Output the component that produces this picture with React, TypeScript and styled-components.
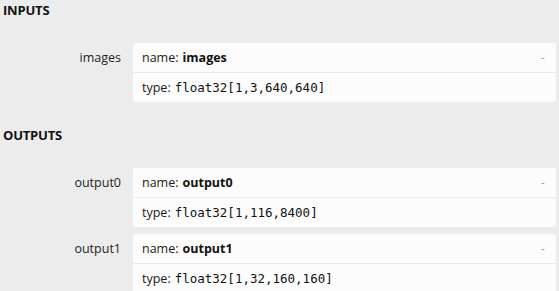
import React from "react";
import styled, { createGlobalStyle } from "styled-components";

interface Argument {
  label: string;
  name: string;
  type: string;
}

const inputs: Argument[] = [
  { label: "images", name: "images", type: "float32[1,3,640,640]" },
];

const outputs: Argument[] = [
  { label: "output0", name: "output0", type: "float32[1,116,8400]" },
  { label: "output1", name: "output1", type: "float32[1,32,160,160]" },
];

const GlobalStyle = createGlobalStyle`
  html, body {
    margin: 0;
    padding: 0;
    background: #ececec;
  }
  body {
    font-family: "Open Sans", "Noto Sans", "Liberation Sans", sans-serif;
    color: #1a1a1a;
    overflow: hidden;
  }
`;

const Page = styled.div`
  width: 559px;
  height: 291px;
  padding: 0 3px;
  box-sizing: border-box;
  overflow: hidden;
`;

const Section = styled.section`
  margin-bottom: 23px;
`;

const Header = styled.div`
  font-size: 13px;
  font-weight: 700;
  line-height: 20px;
  letter-spacing: -0.2px;
  color: #111;
`;

const List = styled.div`
  display: flex;
  flex-direction: column;
  gap: 7px;
  padding-top: 23px;
`;

const Item = styled.div`
  display: grid;
  grid-template-columns: 118px 1fr;
  column-gap: 12px;
  align-items: start;
`;

const Label = styled.div`
  text-align: right;
  font-size: 12.5px;
  line-height: 29px;
  color: #1e1e1e;
`;

const Card = styled.div`
  background: #fcfcfc;
  border-radius: 3px;
  overflow: hidden;
`;

const Row = styled.div<{ $first?: boolean }>`
  display: flex;
  align-items: center;
  height: 29px;
  padding: 0 10px 0 9px;
  font-size: 12.5px;
  border-top: ${(p) => (p.$first ? "none" : "1px solid #ececec")};
`;

const Key = styled.span`
  margin-right: 4px;
`;

const Bold = styled.b`
  font-weight: 700;
  color: #111;
`;

const Code = styled.code`
  font-family: "DejaVu Sans Mono", "Liberation Mono", monospace;
  font-size: 12.5px;
  color: #111;
`;

const Expander = styled.span`
  margin-left: auto;
  font-family: "DejaVu Sans Mono", monospace;
  font-size: 11px;
  color: #9a9a9a;
`;

const ArgumentCard = ({ arg }: { arg: Argument }) => (
  <Item>
    <Label>{arg.label}</Label>
    <Card>
      <Row $first>
        <Key>name:</Key>
        <Bold>{arg.name}</Bold>
        <Expander>-</Expander>
      </Row>
      <Row>
        <Key>type:</Key>
        <Code>{arg.type}</Code>
      </Row>
    </Card>
  </Item>
);

const App = () => {
  return (
    <>
      <GlobalStyle />
      <Page>
        <Section>
          <Header>INPUTS</Header>
          <List>
            {inputs.map((a) => (
              <ArgumentCard key={a.name} arg={a} />
            ))}
          </List>
        </Section>
        <Section>
          <Header>OUTPUTS</Header>
          <List>
            {outputs.map((a) => (
              <ArgumentCard key={a.name} arg={a} />
            ))}
          </List>
        </Section>
      </Page>
    </>
  );
};

export default App;
